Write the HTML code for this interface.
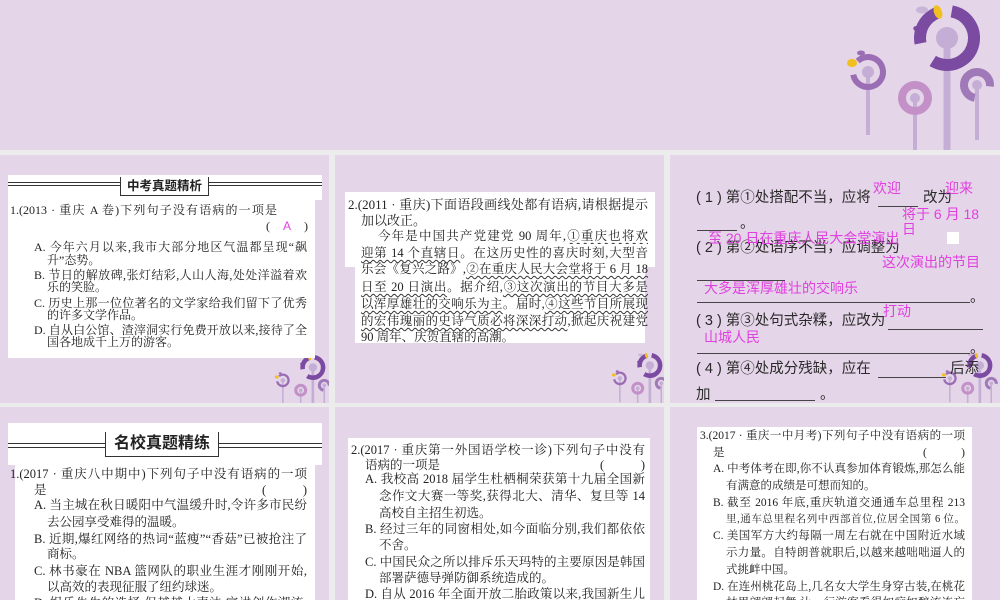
<!DOCTYPE html>
<html><head><meta charset="utf-8"><style>
*{margin:0;padding:0;box-sizing:border-box}
body{width:1000px;height:600px;overflow:hidden;background:#ececec;position:relative;font-family:"Liberation Serif","Noto Serif CJK SC",serif;color:#222}
.p{position:absolute;background:#e5d5e8;overflow:hidden}
.w{position:absolute;background:#fff}
.t{position:absolute;white-space:nowrap;font-size:12px;line-height:15px}
.j{white-space:normal;text-align:justify;text-align-last:justify;height:15px;overflow:hidden}
.s{font-family:"Liberation Sans","Noto Sans CJK SC",sans-serif;font-size:14.5px;line-height:18px;color:#2a2a2a}
.m{color:#e040e0;font-family:"Liberation Sans","Noto Sans CJK SC",sans-serif}
.u{text-decoration:underline wavy #333;text-decoration-thickness:1px;text-underline-offset:2px}
.ln{position:absolute;border-bottom:1px solid #444;height:1px}
.hd{position:absolute;font-family:"Liberation Sans","Noto Sans CJK SC",sans-serif;font-weight:bold;background:#fff;padding:0 6px;border:1px solid #333;border-top:none}
</style></head><body>

<svg width="0" height="0" style="position:absolute">
 <defs>
 <g id="fl">
  <line x1="947" y1="38" x2="947" y2="150" stroke="#c4aed6" stroke-width="7"/>
  <circle cx="947" cy="38" r="27" fill="none" stroke="#7b4ba2" stroke-width="12" stroke-dasharray="95 22 40 40"  transform="rotate(-80 947 38)"/>
  <circle cx="947" cy="38" r="11" fill="#c4aed6"/>
  <ellipse cx="938" cy="12" rx="4" ry="7" fill="#f0c020" transform="rotate(-20 938 12)"/>
  <ellipse cx="922" cy="10" rx="6" ry="3.5" fill="#c9b5d8"/>
  <ellipse cx="920" cy="30" rx="7" ry="3.5" fill="#7b4ba2" transform="rotate(20 920 30)"/>
  <line x1="868" y1="72" x2="868" y2="135" stroke="#c4aed6" stroke-width="4"/>
  <circle cx="868" cy="72" r="15" fill="none" stroke="#9a6db4" stroke-width="6" stroke-dasharray="60 15 20 20" transform="rotate(-60 868 72)"/>
  <circle cx="868" cy="72" r="6" fill="#c4aed6"/>
  <ellipse cx="852" cy="63" rx="5" ry="4" fill="#f0c020"/>
  <ellipse cx="861" cy="53" rx="4" ry="2.5" fill="#9a6db4"/>
  <line x1="915" y1="98" x2="915" y2="150" stroke="#c4aed6" stroke-width="4"/>
  <circle cx="915" cy="98" r="13" fill="none" stroke="#c391c8" stroke-width="8"/>
  <circle cx="915" cy="98" r="5" fill="#c4aed6"/>
  <line x1="977" y1="85" x2="977" y2="140" stroke="#c4aed6" stroke-width="4"/>
  <circle cx="977" cy="85" r="13" fill="none" stroke="#a07ab8" stroke-width="8" stroke-dasharray="60 22" transform="rotate(100 977 85)"/>
  <circle cx="977" cy="85" r="5" fill="#c4aed6"/>
 </g>
 </defs>
</svg>

<!-- top slide -->
<div class="p" style="left:0;top:0;width:1000px;height:150px">
<svg width="1000" height="150" style="position:absolute;left:0;top:0"><use href="#fl"/></svg>
</div>

<!-- row1 panel1 -->
<div class="p" style="left:0;top:155px;width:329px;height:248px">
 <svg width="329" height="248" style="position:absolute;left:0;top:0"><g transform="translate(-47,198) scale(0.38)"><use href="#fl"/></g></svg>
 <div class="w" style="left:8px;top:20px;width:314px;height:25px"></div>
 <div style="position:absolute;left:8px;top:27px;width:314px;height:4px;border-top:1px solid #333;border-bottom:1px solid #333"></div>
 <div class="hd" style="left:120px;top:22px;font-size:12.5px;line-height:18px">中考真题精析</div>
 <div class="w" style="left:8px;top:45px;width:307px;height:158px"></div>
 <div class="t j" style="left:10px;top:48px;width:267px">1.(2013 · 重庆 A 卷)下列句子没有语病的一项是</div>
 <div class="t j" style="left:266px;top:64px;width:42px">( <span class="m">A</span> )</div>
 <div class="t j" style="left:34px;top:85px;width:273px">A. 今年六月以来,我市大部分地区气温都呈现“飙</div>
 <div class="t" style="left:47px;top:98px">升”态势。</div>
 <div class="t j" style="left:34px;top:113px;width:273px">B. 节日的解放碑,张灯结彩,人山人海,处处洋溢着欢</div>
 <div class="t" style="left:47px;top:125px">乐的笑脸。</div>
 <div class="t j" style="left:34px;top:141px;width:273px">C. 历史上那一位位著名的文学家给我们留下了优秀</div>
 <div class="t" style="left:47px;top:153px">的许多文学作品。</div>
 <div class="t j" style="left:34px;top:168px;width:273px">D. 自从白公馆、渣滓洞实行免费开放以来,接待了全</div>
 <div class="t" style="left:47px;top:180px">国各地成千上万的游客。</div>
</div>

<!-- row1 panel2 -->
<div class="p" style="left:335px;top:155px;width:329px;height:248px">
 <svg width="329" height="248" style="position:absolute;left:0;top:0"><g transform="translate(-45,196) scale(0.38)"><use href="#fl"/></g></svg>
 <div class="w" style="left:10px;top:37px;width:310px;height:75px"></div>
 <div class="w" style="left:20px;top:110px;width:290px;height:78px"></div>
 <div class="t j" style="left:13px;top:42px;width:300px;font-size:13px">2.(2011 · 重庆)下面语段画线处都有语病,请根据提示</div>
 <div class="t" style="left:26px;top:58px;font-size:13px">加以改正。</div>
 <div class="t j" style="left:43px;top:74px;width:270px;font-size:12.5px">今年是中国共产党建党 90 周年,<span class="u">①重庆也将欢</span></div>
 <div class="t j" style="left:26px;top:91px;width:287px;font-size:12.5px;height:18px"><span class="u">迎第 14 个直辖日</span>。在这历史性的喜庆时刻,大型音</div>
 <div class="t j" style="left:26px;top:107px;width:287px;font-size:12.5px;height:18px">乐会《复兴之路》,<span class="u">②在重庆人民大会堂将于 6 月 18</span></div>
 <div class="t j" style="left:26px;top:125px;width:287px;font-size:12.5px;height:18px"><span class="u">日至 20 日演出</span>。据介绍,<span class="u">③这次演出的节目大多是</span></div>
 <div class="t j" style="left:26px;top:142px;width:287px;font-size:12.5px;height:18px"><span class="u">以浑厚雄壮的交响乐为主</span>。届时,<span class="u">④这些节目所展现</span></div>
 <div class="t j" style="left:26px;top:159px;width:287px;font-size:12.5px;height:18px"><span class="u">的宏伟瑰丽的史诗气质必将深深打动</span>,掀起庆祝建党</div>
 <div class="t" style="left:26px;top:175px;font-size:12.5px">90 周年、庆贺直辖的高潮。</div>
</div>

<!-- row1 panel3 -->
<div class="p" style="left:670px;top:155px;width:330px;height:248px">
 <svg width="330" height="248" style="position:absolute;left:0;top:0"><g transform="translate(-50,196) scale(0.38)"><use href="#fl"/></g></svg>
 <div class="t s" style="left:26px;top:34px">( 1 ) 第①处搭配不当，应将</div><div class="ln" style="left:208px;top:51px;width:40px"></div>
 <div class="t s" style="left:253px;top:34px">改为</div>
 <div class="t m" style="left:203px;top:26px;font-size:14px">欢迎</div>
 <div class="t m" style="left:275px;top:26px;font-size:14px">迎来</div>
 <div class="ln" style="left:27px;top:75px;width:40px"></div><div class="t s" style="left:70px;top:60px">。</div>
 <div class="t m" style="left:232px;top:52px;font-size:14px;line-height:15px">将于 6 月 18<br>日</div>
 <div style="position:absolute;left:277px;top:77px;width:12px;height:12px;background:#fff"></div>
 <div class="t s" style="left:26px;top:84px">( 2 ) 第②处语序不当，应调整为</div>
 <div class="t m" style="left:38px;top:76px;font-size:14px">至 20 日在重庆人民大会堂演出</div>
 <div class="t m" style="left:212px;top:100px;font-size:14px">这次演出的节目</div>
 <div class="ln" style="left:27px;top:125px;width:88px"></div>
 <div class="t m" style="left:34px;top:126px;font-size:14px">大多是浑厚雄壮的交响乐</div>
 <div class="ln" style="left:27px;top:147px;width:273px"></div><div class="t s" style="left:300px;top:134px">。</div>
 <div class="t m" style="left:213px;top:149px;font-size:14px">打动</div>
 <div class="t s" style="left:26px;top:157px">( 3 ) 第③处句式杂糅，应改为</div><div class="ln" style="left:218px;top:174px;width:95px"></div>
 <div class="t m" style="left:34px;top:175px;font-size:14px">山城人民</div>
 <div class="ln" style="left:27px;top:198px;width:273px"></div><div class="t s" style="left:300px;top:185px">。</div>
 <div class="t s" style="left:26px;top:205px">( 4 ) 第④处成分残缺，应在</div><div class="ln" style="left:208px;top:222px;width:68px"></div>
 <div class="t s" style="left:280px;top:205px">后添</div>
 <div class="t s" style="left:26px;top:231px">加</div><div class="ln" style="left:45px;top:245px;width:100px"></div><div class="t s" style="left:150px;top:231px">。</div>
</div>

<!-- row2 panel1 -->
<div class="p" style="left:0;top:407px;width:329px;height:193px">
 <div class="w" style="left:8px;top:16px;width:314px;height:42px"></div>
 <div style="position:absolute;left:8px;top:36px;width:314px;height:5px;border-top:1px solid #333;border-bottom:1px solid #333"></div>
 <div class="hd" style="left:105px;top:25px;font-size:16px;line-height:24px;padding:0 8px">名校真题精练</div>
 <div class="w" style="left:15px;top:58px;width:300px;height:140px"></div>
 <div class="t j" style="left:10px;top:60px;width:297px;font-size:12.5px">1.(2017 · 重庆八中期中)下列句子中没有语病的一项</div>
 <div class="t" style="left:34px;top:76px;font-size:12.5px">是</div>
 <div class="t j" style="left:262px;top:76px;width:45px;font-size:12.5px">( )</div>
 <div class="t j" style="left:34px;top:91px;width:273px;font-size:12.5px">A. 当主城在秋日暖阳中气温缓升时,令许多市民纷纷</div>
 <div class="t" style="left:47px;top:108px;font-size:12.5px">去公园享受难得的温暖。</div>
 <div class="t j" style="left:34px;top:125px;width:273px;font-size:12.5px">B. 近期,爆红网络的热词“蓝瘦”“香菇”已被抢注了</div>
 <div class="t" style="left:47px;top:140px;font-size:12.5px">商标。</div>
 <div class="t j" style="left:34px;top:157px;width:273px;font-size:12.5px">C. 林书豪在 NBA 篮网队的职业生涯才刚刚开始,就</div>
 <div class="t" style="left:47px;top:173px;font-size:12.5px">以高效的表现征服了纽约球迷。</div>
 <div class="t j" style="left:34px;top:189px;width:273px;font-size:12.5px">D. 娱乐先生的选择,但越越大声法,宣讲创作潮流,留</div>
</div>

<!-- row2 panel2 -->
<div class="p" style="left:335px;top:407px;width:329px;height:193px">
 <div class="w" style="left:13px;top:31px;width:302px;height:170px"></div>
 <div class="t j" style="left:16px;top:36px;width:294px;font-size:12.5px">2.(2017 · 重庆第一外国语学校一诊)下列句子中没有</div>
 <div class="t" style="left:30px;top:51px;font-size:12.5px">语病的一项是</div>
 <div class="t j" style="left:265px;top:51px;width:45px;font-size:12.5px">( )</div>
 <div class="t j" style="left:30px;top:65px;width:280px;font-size:12.5px">A. 我校高 2018 届学生杜栖桐荣获第十九届全国新概</div>
 <div class="t j" style="left:44px;top:82px;width:266px;font-size:12.5px">念作文大赛一等奖,获得北大、清华、复旦等 14 所</div>
 <div class="t" style="left:44px;top:99px;font-size:12.5px">高校自主招生初选。</div>
 <div class="t j" style="left:30px;top:115px;width:280px;font-size:12.5px">B. 经过三年的同窗相处,如今面临分别,我们都依依</div>
 <div class="t" style="left:44px;top:131px;font-size:12.5px">不舍。</div>
 <div class="t j" style="left:30px;top:148px;width:280px;font-size:12.5px">C. 中国民众之所以排斥乐天玛特的主要原因是韩国</div>
 <div class="t" style="left:44px;top:164px;font-size:12.5px">部署萨德导弹防御系统造成的。</div>
 <div class="t j" style="left:30px;top:180px;width:280px;font-size:12.5px">D. 自从 2016 年全面开放二胎政策以来,我国新生儿</div>
</div>

<!-- row2 panel3 -->
<div class="p" style="left:670px;top:407px;width:330px;height:193px">
 <div class="w" style="left:27px;top:20px;width:275px;height:180px"></div>
 <div class="t j" style="left:30px;top:22px;width:265px;font-size:11.5px">3.(2017 · 重庆一中月考)下列句子中没有语病的一项</div>
 <div class="t" style="left:43px;top:39px;font-size:11.5px">是</div>
 <div class="t j" style="left:253px;top:39px;width:42px;font-size:11.5px">( )</div>
 <div class="t j" style="left:43px;top:55px;width:252px;font-size:11.5px">A. 中考体考在即,你不认真参加体育锻炼,那怎么能</div>
 <div class="t" style="left:56px;top:72px;font-size:11.5px">有满意的成绩是可想而知的。</div>
 <div class="t j" style="left:43px;top:89px;width:252px;font-size:11.5px">B. 截至 2016 年底,重庆轨道交通通车总里程 213 公</div>
 <div class="t j" style="left:56px;top:105px;width:239px;font-size:10.5px">里,通车总里程名列中西部首位,位居全国第 6 位。</div>
 <div class="t j" style="left:43px;top:122px;width:252px;font-size:11.5px">C. 美国军方大约每隔一周左右就在中国附近水域展</div>
 <div class="t j" style="left:56px;top:139px;width:239px;font-size:11.5px">示力量。自特朗普就职后,以越来越咄咄逼人的方</div>
 <div class="t" style="left:56px;top:156px;font-size:11.5px">式挑衅中国。</div>
 <div class="t j" style="left:43px;top:173px;width:252px;font-size:11.5px">D. 在连州桃花岛上,几名女大学生身穿古装,在桃花</div>
 <div class="t j" style="left:56px;top:189px;width:239px;font-size:11.5px">林里翩翩起舞,让一行游客看得如痴如醉流连忘返</div>
</div>
</body></html>
